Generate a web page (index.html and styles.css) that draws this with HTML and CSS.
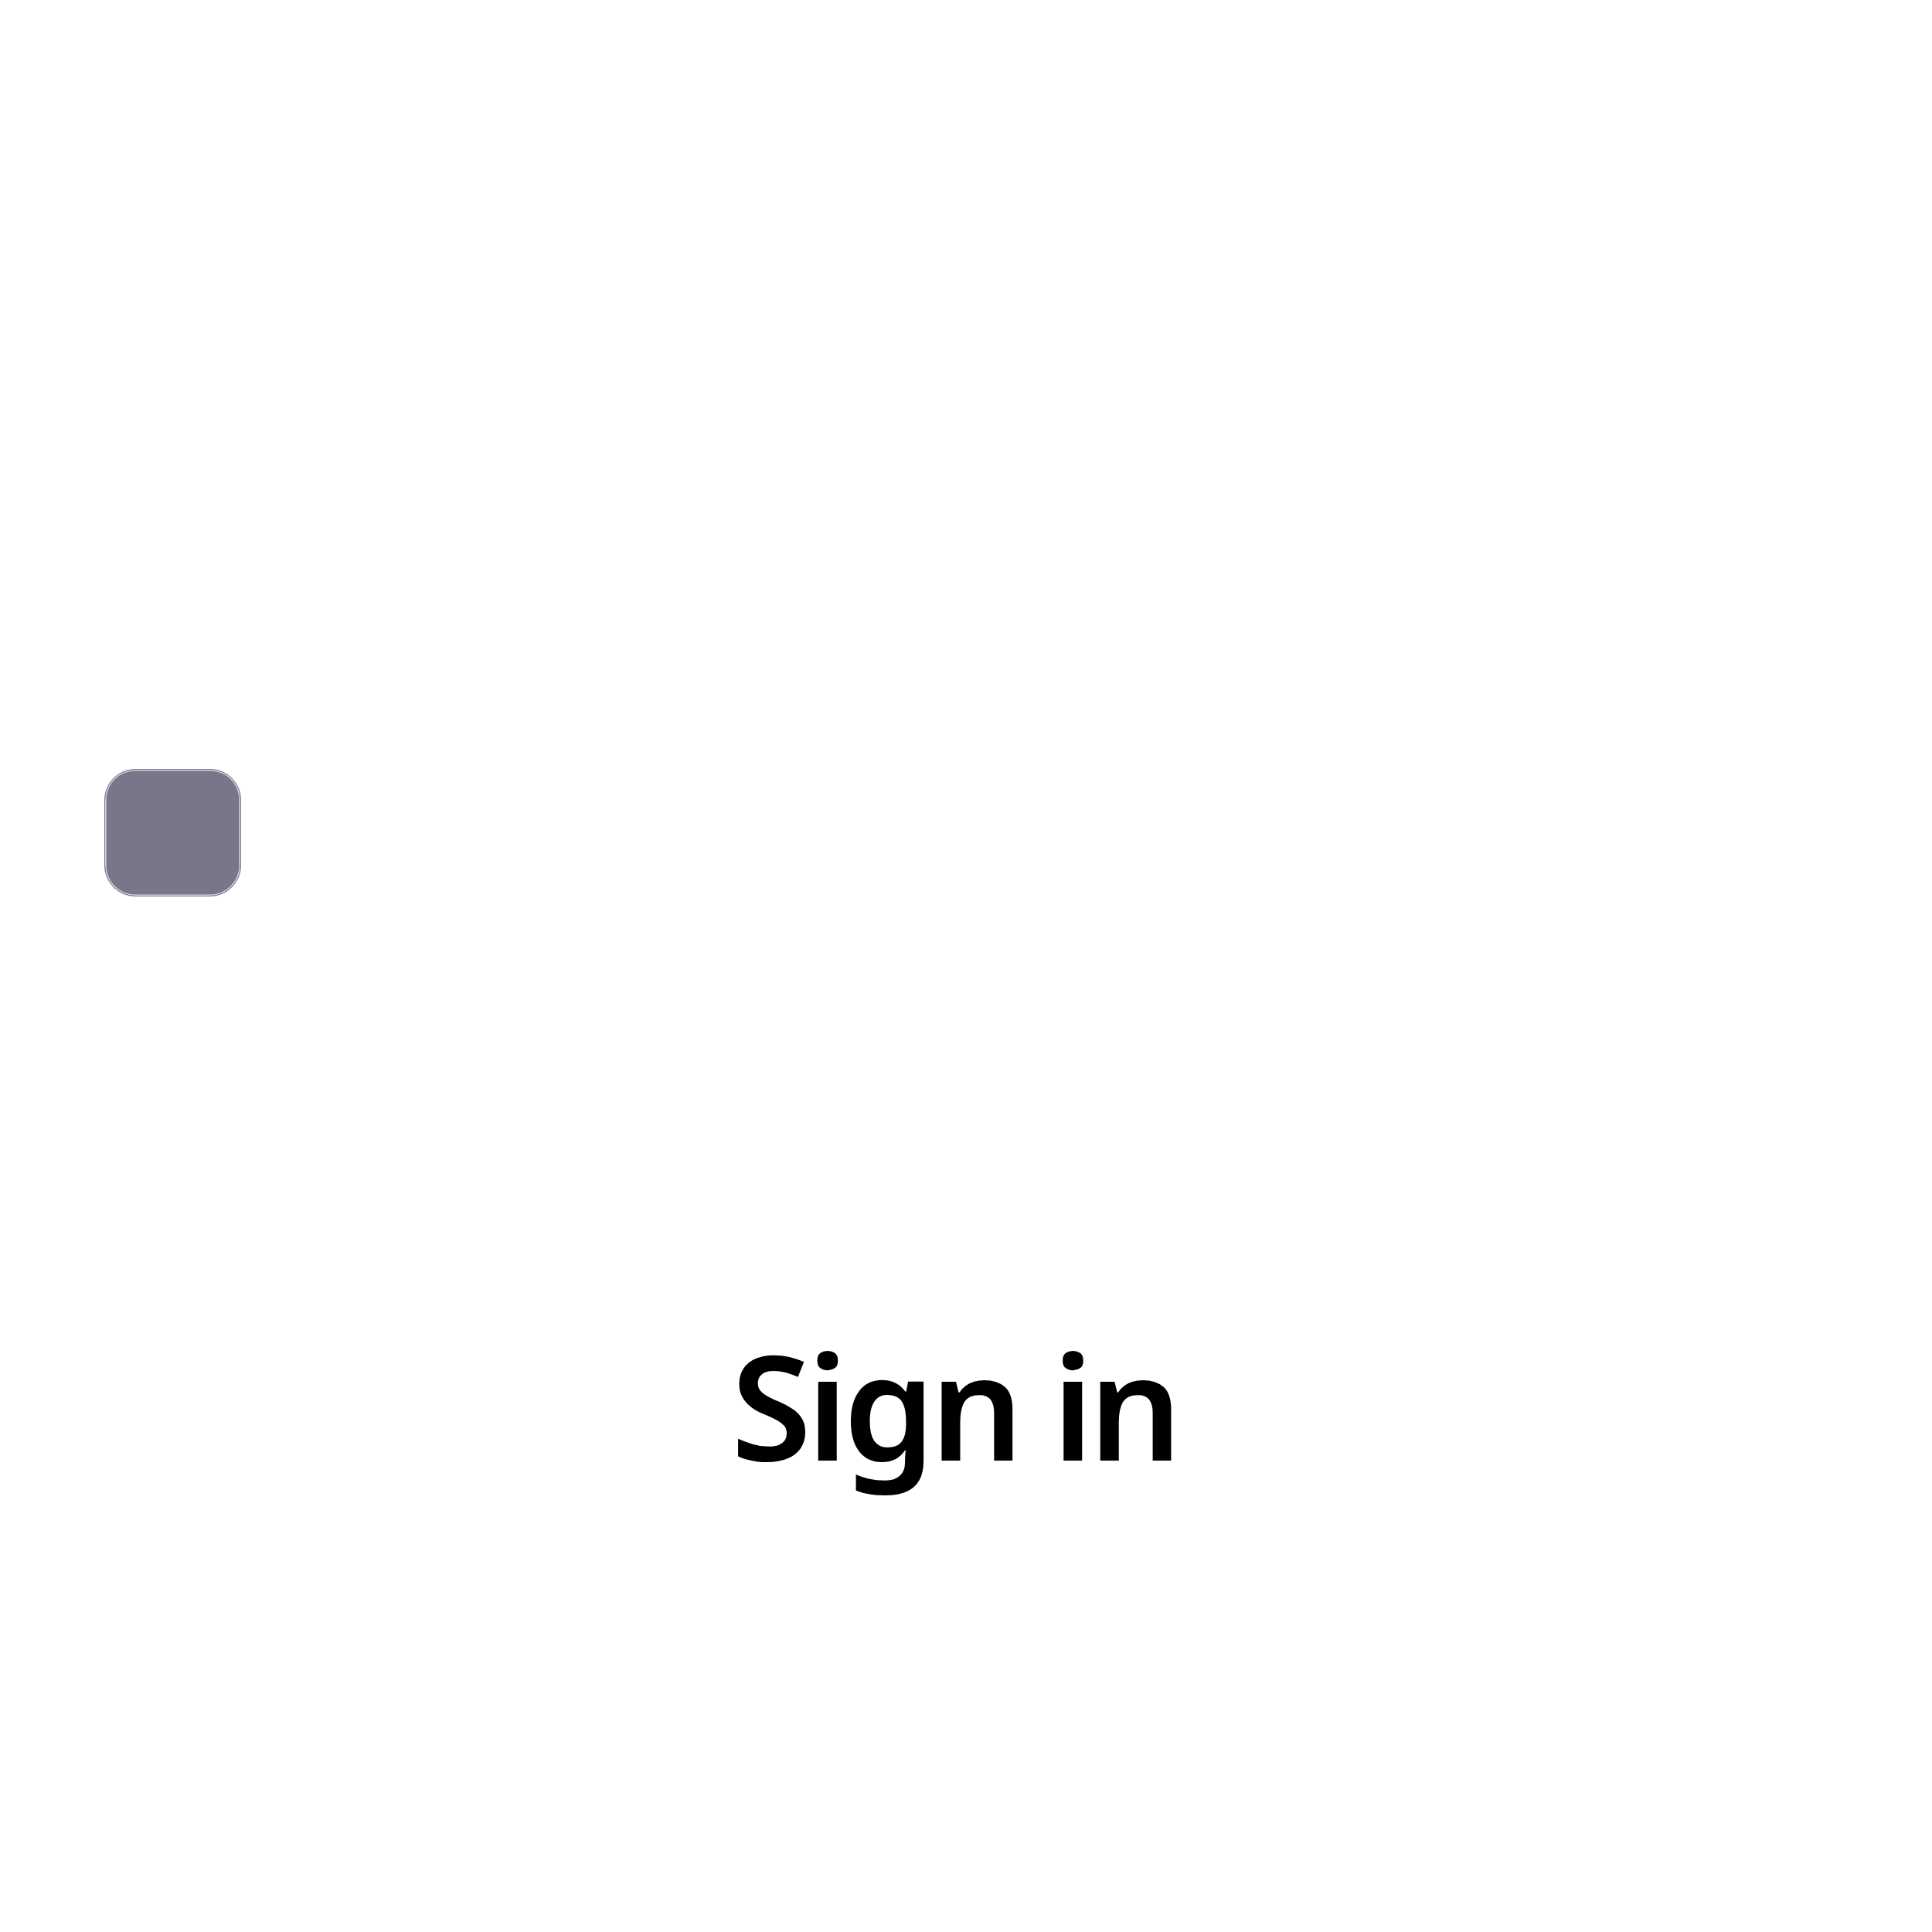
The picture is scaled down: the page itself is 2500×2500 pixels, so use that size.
FILE: index.html
```html
<!DOCTYPE html>
<html><head><link rel="stylesheet" href="styles.css"></head>
<body>
<main class="page">
  <div class="avatar"></div>
  <h1 class="title">Sign in</h1>
</main>
</body></html>
```
FILE: styles.css
```css
body{margin:0;background:#fff;}
.page{padding:995px 0 0 135px;}
.avatar{width:175px;height:163px;border:1px solid #77758a;border-radius:40px;background:#78778a;box-shadow:inset 0 0 0 1.5px #d6d5de;}
.title{margin:525px 0 0 811px;font-family:"Noto Sans",sans-serif;font-size:189px;font-weight:600;line-height:1.4;color:#000;letter-spacing:-6px;}
```
